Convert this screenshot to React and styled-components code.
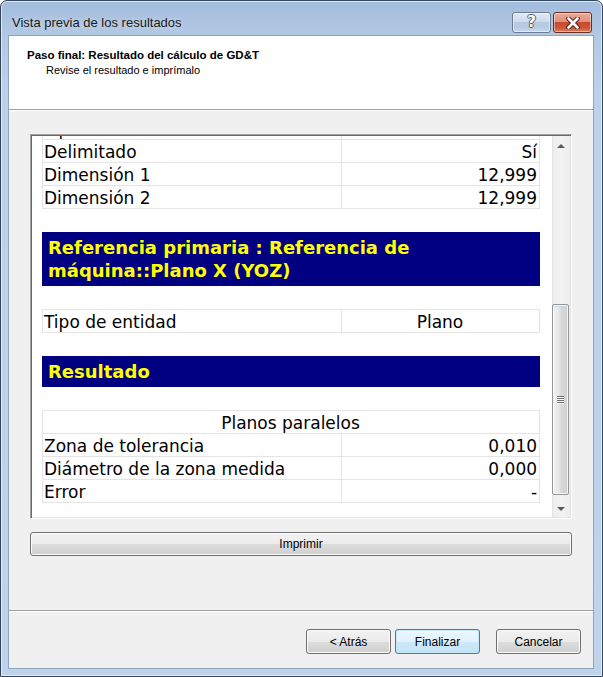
import React, { useLayoutEffect, useRef } from "react";
import styled, { createGlobalStyle } from "styled-components";

const Global = createGlobalStyle`
  html, body { margin: 0; padding: 0; background: #ffffff; }
  body { width: 603px; height: 677px; overflow: hidden; font-family: "Liberation Sans", Arial, sans-serif; }
  *, *::before, *::after { box-sizing: border-box; }
`;

const Window = styled.div`
  width: 603px;
  height: 677px;
  display: flex;
  flex-direction: column;
  border: 1px solid #33455a;
  border-radius: 7px 7px 0 0;
  background: linear-gradient(to bottom, #a2bcdc 0px, #b3c9e4 36px, #bcd1ea 90px, #bfd4eb 100%);
  box-shadow: inset 0 0 0 1px rgba(232, 241, 251, 0.8);
  padding: 0 9px 8px 8px;
`;

const TitleBar = styled.div`
  height: 35px;
  flex: none;
  display: flex;
  align-items: flex-start;
  padding-top: 11px;
`;

const Title = styled.div`
  flex: 1;
  margin-left: 3px;
  font: 13px/21px "Liberation Sans", Arial, sans-serif;
  color: #1b1b1b;
  text-shadow: 0 0 6px rgba(255, 255, 255, 0.6);
`;

const CaptionButtons = styled.div`
  display: flex;
  gap: 2px;
  margin-right: 1px;
`;

const CaptionButton = styled.div`
  width: 39px;
  height: 21px;
  border-radius: 3px;
  border: 1px solid ${(p) => (p.$close ? "#6f2c22" : "#6a7b92")};
  background: ${(p) =>
    p.$close
      ? "linear-gradient(#eaab9c 0%, #df8f7b 45%, #c84a31 50%, #cd5637 78%, #dd7f60 100%)"
      : "linear-gradient(#e1eaf5 0%, #ccdaec 45%, #b6c9e1 50%, #b8cce5 80%, #c9dbef 100%)"};
  box-shadow: inset 0 0 0 1px rgba(255, 255, 255, 0.45);
  display: flex;
  align-items: center;
  justify-content: center;
`;

const HelpGlyph = styled.span`
  font: bold 15px/1 "DejaVu Sans", Verdana, sans-serif;
  color: #ffffff;
  text-shadow: 1px 0 0 #4d5d73, -1px 0 0 #4d5d73, 0 1px 0 #4d5d73, 0 -1px 0 #4d5d73;
`;

const Client = styled.div`
  flex: 1;
  display: flex;
  flex-direction: column;
  background: #f0f0f0;
  outline: 1px solid #8fa4be;
`;

const Header = styled.div`
  height: 74px;
  flex: none;
  background: #ffffff;
  border-bottom: 1px solid #a0a0a0;
  padding: 12px 18px 0;
`;

const HeaderTitle = styled.div`
  font: bold 11.5px/14px "Liberation Sans", Arial, sans-serif;
  color: #000;
`;

const HeaderSubtitle = styled.div`
  margin: 1px 0 0 19px;
  font: 11px/14px "Liberation Sans", Arial, sans-serif;
  color: #000;
`;

const Body = styled.div`
  flex: 1;
  border-top: 1px solid #ffffff;
  padding: 23px 21px 0 21px;
  display: flex;
  flex-direction: column;
  gap: 13px;
`;

const ListBox = styled.div`
  height: 385px;
  display: flex;
  padding: 1px;
  border: 1px solid;
  border-color: #a0a0a0 #ffffff #ffffff #a0a0a0;
  box-shadow: inset 1px 1px 0 #696969, inset -1px -1px 0 #e3e3e3;
  background: #ffffff;
`;

const Viewport = styled.div`
  flex: 1;
  overflow: hidden;
  background: #ffffff;
`;

const Content = styled.div`
  display: flex;
  flex-direction: column;
  gap: 23px;
  padding: 10px 12px 30px 10px;
`;

const Bar = styled.div`
  background: #000080;
  color: #ffff00;
  font: bold 18px/23px "DejaVu Sans", Verdana, sans-serif;
  padding: 4px 6px;
`;

const Table = styled.table`
  width: 497px;
  table-layout: fixed;
  border-collapse: collapse;
  font: 17px/20px "DejaVu Sans", Verdana, sans-serif;
  color: #000;
`;

const Col = styled.col`
  width: ${(p) => p.$w}px;
`;

const Cell = styled.td`
  border: 1px solid #e4e4e4;
  padding: 2px 2px 0 1px;
  text-align: ${(p) => p.$align || "left"};
  white-space: nowrap;
  overflow: hidden;
`;

const ScrollBar = styled.div`
  width: 18px;
  flex: none;
  display: flex;
  flex-direction: column;
  background: linear-gradient(to right, #e2e2e2 0px, #eeeeee 2px, #f3f3f3 60%, #ececec 100%);
`;

const ArrowButton = styled.div`
  height: 17px;
  flex: none;
  display: flex;
  align-items: center;
  justify-content: center;
  padding-top: ${(p) => (p.$down ? "0" : "3px")};
`;

const Arrow = styled.div`
  width: 0;
  height: 0;
  border-left: 4px solid transparent;
  border-right: 4px solid transparent;
  ${(p) =>
    p.$down
      ? "border-top: 4px solid #5a5a5a;"
      : "border-bottom: 4px solid #5a5a5a;"}
`;

const Track = styled.div`
  flex: 1;
  display: flex;
  flex-direction: column;
`;

const Thumb = styled.div`
  margin: ${(p) => p.$top}px 1px 0 0;
  height: ${(p) => p.$h}px;
  border: 1px solid #979797;
  border-radius: 2px;
  background: linear-gradient(to right, #f3f3f3 0%, #e6e6e6 40%, #d8d8d8 55%, #d0d0d0 100%);
  box-shadow: inset 0 0 0 1px rgba(255, 255, 255, 0.75), inset 0 2px 0 rgba(170, 215, 240, 0.6);
  display: flex;
  align-items: center;
  justify-content: center;
`;

const Grip = styled.div`
  width: 7px;
  height: 8px;
  background: repeating-linear-gradient(to bottom, #6e6e6e 0px, #6e6e6e 1px, #fbfbfb 1px, #fbfbfb 2px);
`;

const PushButton = styled.button`
  width: ${(p) => (p.$wide ? "100%" : "85px")};
  height: ${(p) => (p.$wide ? "24px" : "25px")};
  flex: none;
  margin-left: ${(p) => p.$gapBefore || 0}px;
  padding: 0;
  font: 12px "Liberation Sans", Arial, sans-serif;
  color: #000;
  border: 1px solid ${(p) => (p.$default ? "#3c7fb1" : "#707070")};
  border-radius: 3px;
  background: ${(p) =>
    p.$default
      ? "linear-gradient(#edf7fd 0%, #e1f2fb 50%, #cfe9f8 50%, #c2e3f5 100%)"
      : "linear-gradient(#f2f2f2 0%, #ebebeb 50%, #dddddd 50%, #cfcfcf 100%)"};
  box-shadow: inset 0 0 0 1px ${(p) => (p.$default ? "#c4e5f7" : "#fbfbfb")};
`;

const Footer = styled.div`
  height: 58px;
  flex: none;
  border-top: 1px solid #a0a0a0;
  box-shadow: inset 0 1px 0 #ffffff;
  display: flex;
  justify-content: flex-end;
  align-items: flex-start;
  gap: 4px;
  padding: 18px 12px 0 0;
`;

function DataTable({ rows, anchor, anchorRef }) {
  return (
    <Table>
      <colgroup>
        <Col $w={299} />
        <Col $w={198} />
      </colgroup>
      <tbody>
        {rows.map((r, i) =>
          r.span ? (
            <tr key={i}>
              <Cell colSpan={2} $align="center">
                {r.span}
              </Cell>
            </tr>
          ) : (
            <tr key={i}>
              <Cell ref={anchor === r.label ? anchorRef : undefined}>{r.label}</Cell>
              <Cell $align={r.align || "right"}>{r.value}</Cell>
            </tr>
          )
        )}
      </tbody>
    </Table>
  );
}

export default function App() {
  const viewportRef = useRef(null);
  const anchorRef = useRef(null);

  useLayoutEffect(() => {
    const vp = viewportRef.current;
    const cell = anchorRef.current;
    if (!vp || !cell) return;
    vp.scrollTop = 0;
    const off = cell.getBoundingClientRect().top - vp.getBoundingClientRect().top;
    vp.scrollTop = Math.round(off - 4);
  }, []);

  return (
    <>
      <Global />
      <Window>
        <TitleBar>
          <Title>Vista previa de los resultados</Title>
          <CaptionButtons>
            <CaptionButton>
              <HelpGlyph>?</HelpGlyph>
            </CaptionButton>
            <CaptionButton $close>
              <svg width="14" height="12" viewBox="0 0 14 12">
                <path d="M2.5 1.5 L11.5 10.5 M11.5 1.5 L2.5 10.5" stroke="#5a2018" strokeWidth="4.6" strokeLinecap="round" fill="none" />
                <path d="M2.5 1.5 L11.5 10.5 M11.5 1.5 L2.5 10.5" stroke="#ffffff" strokeWidth="2.6" strokeLinecap="round" fill="none" />
              </svg>
            </CaptionButton>
          </CaptionButtons>
        </TitleBar>
        <Client>
          <Header>
            <HeaderTitle>Paso final: Resultado del cálculo de GD&amp;T</HeaderTitle>
            <HeaderSubtitle>Revise el resultado e imprímalo</HeaderSubtitle>
          </Header>
          <Body>
            <ListBox>
              <Viewport ref={viewportRef}>
                <Content>
                  <Bar>Tolerancia : Paralelismo</Bar>
                  <DataTable
                    rows={[
                      { label: "Tipo de tolerancia", value: "Paralelismo", align: "center" },
                      { label: "Valor de tolerancia", value: "0,010" },
                    ]}
                  />
                  <Bar>Elemento tolerado : Plano 1</Bar>
                  <DataTable
                    anchor="Delimitado"
                    anchorRef={anchorRef}
                    rows={[
                      { label: "Tipo de entidad", value: "Plano", align: "center" },
                      { label: "Delimitado", value: "Sí" },
                      { label: "Dimensión 1", value: "12,999" },
                      { label: "Dimensión 2", value: "12,999" },
                    ]}
                  />
                  <Bar>Referencia primaria : Referencia de máquina::Plano X (YOZ)</Bar>
                  <DataTable rows={[{ label: "Tipo de entidad", value: "Plano", align: "center" }]} />
                  <Bar>Resultado</Bar>
                  <DataTable
                    rows={[
                      { span: "Planos paralelos" },
                      { label: "Zona de tolerancia", value: "0,010" },
                      { label: "Diámetro de la zona medida", value: "0,000" },
                      { label: "Error", value: "-" },
                    ]}
                  />
                </Content>
              </Viewport>
              <ScrollBar>
                <ArrowButton>
                  <Arrow />
                </ArrowButton>
                <Track>
                  <Thumb $top={151} $h={191}>
                    <Grip />
                  </Thumb>
                </Track>
                <ArrowButton $down>
                  <Arrow $down />
                </ArrowButton>
              </ScrollBar>
            </ListBox>
            <PushButton $wide>Imprimir</PushButton>
          </Body>
          <Footer>
            <PushButton>&lt; Atrás</PushButton>
            <PushButton $default>Finalizar</PushButton>
            <PushButton $gapBefore={12}>Cancelar</PushButton>
          </Footer>
        </Client>
      </Window>
    </>
  );
}
